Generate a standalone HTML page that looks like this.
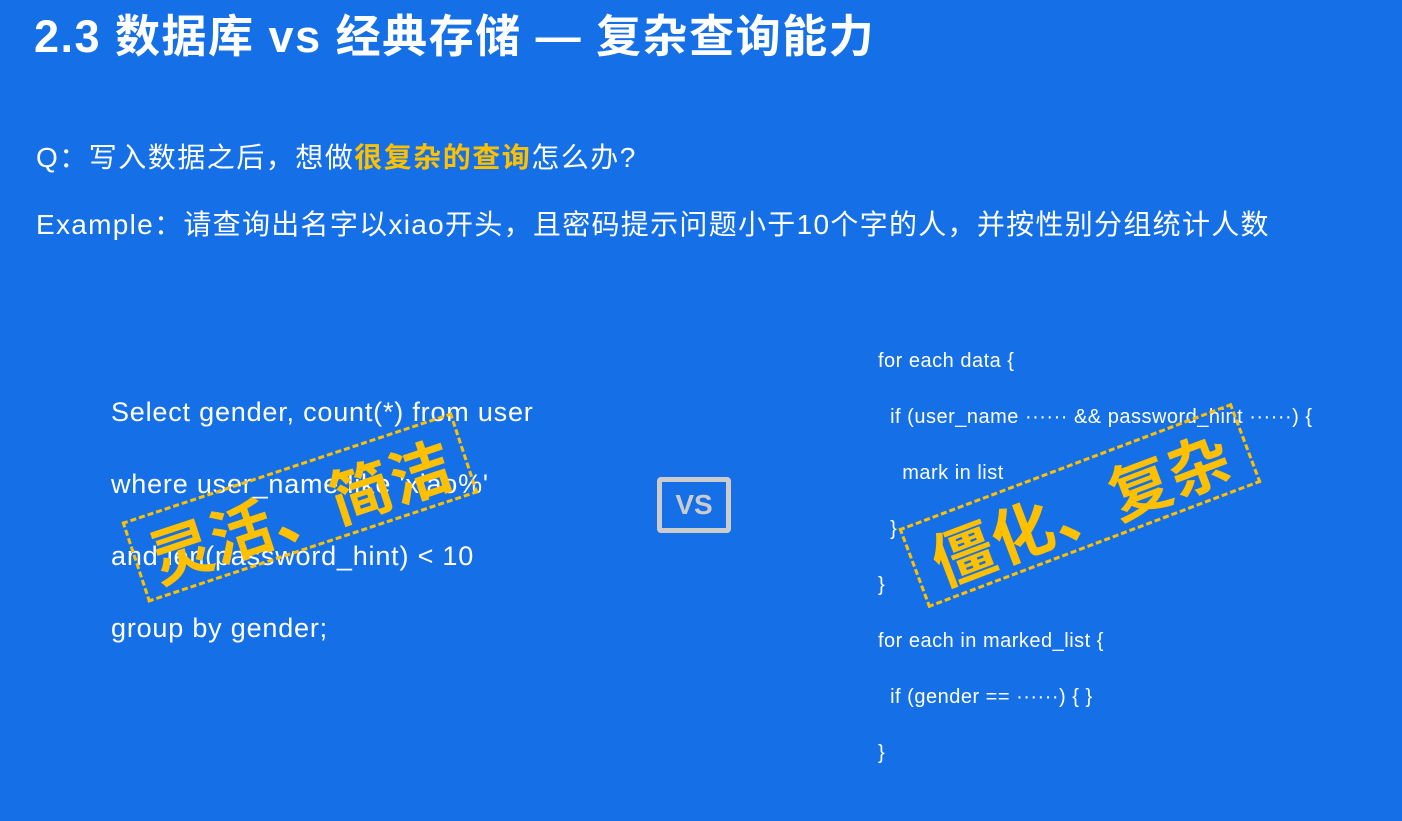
<!DOCTYPE html><html><head><meta charset="utf-8"><style>
body{margin:0;width:1402px;height:821px;background:#1570e8;overflow:hidden;position:relative;font-family:"Liberation Sans","Noto Sans CJK SC",sans-serif;color:#fff}
.t{position:absolute;white-space:nowrap;line-height:1}
.y{color:#ffc000;font-weight:bold}
.stamp{position:absolute;border:3px dashed #ffc000;color:#ffc000;font-weight:bold;font-size:62px;display:flex;align-items:center;justify-content:center;box-sizing:border-box;letter-spacing:1px}
</style></head><body>
<div class="t" style="left:34px;top:14px;font-size:45px;font-weight:bold;letter-spacing:1.5px">2.3 数据库 vs 经典存储 — 复杂查询能力</div>
<div class="t" style="left:36px;top:144px;font-size:28px;letter-spacing:1.5px">Q：写入数据之后，想做<span class="y">很复杂的查询</span>怎么办?</div>
<div class="t" style="left:36px;top:211px;font-size:28px;letter-spacing:1.3px">Example：请查询出名字以xiao开头，且密码提示问题小于10个字的人，并按性别分组统计人数</div>
<div class="t" style="left:111px;top:399px;font-size:27px;letter-spacing:0.8px">Select gender, count(*) from user</div>
<div class="t" style="left:111px;top:471px;font-size:27px;letter-spacing:0.8px">where user_name like 'xiao%'</div>
<div class="t" style="left:111px;top:543px;font-size:27px;letter-spacing:0.8px">and len(password_hint) &lt; 10</div>
<div class="t" style="left:111px;top:615px;font-size:27px;letter-spacing:0.8px">group by gender;</div>
<div class="stamp" style="left:126px;top:465px;width:348px;height:85px;transform:rotate(-18.4deg)">灵活、简洁</div>
<div style="position:absolute;left:657px;top:477px;width:74px;height:56px;border:5px solid #ccc;border-radius:4px;box-sizing:border-box;color:#ccc;font-weight:bold;font-size:28px;display:flex;align-items:center;justify-content:center">VS</div>
<div style="position:absolute;left:878px;top:333px;font-size:20px;line-height:56px;white-space:pre;letter-spacing:0.5px">for each data {
  if (user_name ······ &amp;&amp; password_hint ······) {
    mark in list
  }
}
for each in marked_list {
  if (gender == ······) { }
}</div>
<div class="stamp" style="left:902px;top:463px;width:356px;height:85px;transform:rotate(-20.7deg)">僵化、复杂</div>
</body></html>
